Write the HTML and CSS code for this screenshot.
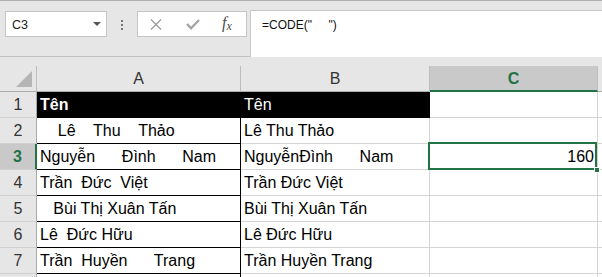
FILE: index.html
```html
<!DOCTYPE html>
<html>
<head>
<meta charset="utf-8">
<link rel="stylesheet" href="styles.css">
</head>
<body>
<div class="app">
  <div class="fbar">
    <div class="namebox"><span class="ref">C3</span><span class="caret"></span></div>
    <div class="dots"><i></i><i></i><i></i></div>
    <div class="fxbox">
      <svg class="ic-x" width="12" height="11" viewBox="0 0 12 11"><path d="M1 0.5 L11 10.5 M11 0.5 L1 10.5" stroke="#9c9c9c" stroke-width="1.4" fill="none"/></svg>
      <svg class="ic-ok" width="14" height="11" viewBox="0 0 14 11"><path d="M1 5 L5 9.3 L13 1" stroke="#a3a3a3" stroke-width="2.3" fill="none"/></svg>
      <span class="fx">f<span class="fxx">x</span></span>
    </div>
    <div class="finput">=CODE("     ")</div>
  </div>

  <div class="sheet">
    <div class="corner"><span class="tri"></span></div>
    <div class="ch">A</div>
    <div class="ch">B</div>
    <div class="ch ch-sel">C</div>
    <div class="ch ch-rest"></div>

    <div class="rh">1</div>
    <div class="c a dark"><b>Tên</b></div>
    <div class="c dark">Tên</div>
    <div class="c"></div>
    <div class="c"></div>

    <div class="rh">2</div>
    <div class="c a">    Lê    Thu    Thảo</div>
    <div class="c">Lê Thu Thảo</div>
    <div class="c"></div>
    <div class="c"></div>

    <div class="rh rh-sel">3</div>
    <div class="c a">Nguyễn      Đình      Nam</div>
    <div class="c">NguyễnĐình      Nam</div>
    <div class="c num active">160<span class="sel"><span class="handle"></span></span></div>
    <div class="c"></div>

    <div class="rh">4</div>
    <div class="c a">Trần  Đức  Việt</div>
    <div class="c">Trần Đức Việt</div>
    <div class="c"></div>
    <div class="c"></div>

    <div class="rh">5</div>
    <div class="c a">   Bùi Thị Xuân Tấn</div>
    <div class="c">Bùi Thị Xuân Tấn</div>
    <div class="c"></div>
    <div class="c"></div>

    <div class="rh">6</div>
    <div class="c a">Lê  Đức Hữu</div>
    <div class="c">Lê Đức Hữu</div>
    <div class="c"></div>
    <div class="c"></div>

    <div class="rh">7</div>
    <div class="c a">Trần  Huyền      Trang</div>
    <div class="c">Trần Huyền Trang</div>
    <div class="c"></div>
    <div class="c"></div>

    <div class="rh"></div>
    <div class="c a"></div>
    <div class="c"></div>
    <div class="c"></div>
    <div class="c"></div>
  </div>
</div>
</body>
</html>
```

FILE: styles.css
```css
* { box-sizing: border-box; }
html, body { margin: 0; padding: 0; }
body {
  width: 602px;
  height: 277px;
  overflow: hidden;
  background: #e6e6e6;
  font-family: "Liberation Sans", Arial, sans-serif;
  color: #000;
}
.app { width: 602px; height: 277px; overflow: hidden; }

/* formula bar */
.fbar {
  height: 57px;
  border-top: 1px solid #b1b1b1;
  border-bottom: 1px solid #c2c2c2;
  padding-top: 9px;
  display: flex;
  align-items: flex-start;
}
.namebox {
  margin-left: 5px;
  margin-top: 1px;
  width: 102px;
  height: 26px;
  background: #fff;
  border: 1px solid #c6c6c6;
  display: flex;
  align-items: center;
  justify-content: space-between;
  padding: 0 5px 0 6px;
  font-size: 12.5px;
  color: #222;
}
.ref { padding-top: 1px; }
.caret {
  width: 0; height: 0;
  border-left: 4px solid transparent;
  border-right: 4px solid transparent;
  border-top: 4px solid #555;
  margin-top: -1px;
}
.dots {
  margin: 10px 14px 0 14px;
  width: 2px;
  display: flex;
  flex-direction: column;
  gap: 2px;
}
.dots i { display: block; width: 2px; height: 2px; background: #777; }
.fxbox {
  margin-top: 1px;
  width: 110px;
  height: 26px;
  background: #fff;
  border: 1px solid #c6c6c6;
  display: flex;
  align-items: center;
}
.ic-x { margin-left: 12px; }
.ic-ok { margin-left: 24px; }
.fx {
  margin-left: 22px;
  font-family: "Liberation Serif", "Times New Roman", serif;
  font-style: italic;
  font-size: 16px;
  color: #4a4a4a;
  line-height: 1;
  margin-top: -3px;
}
.fxx { font-size: 12px; position: relative; top: 2px; }
.finput {
  margin-left: 3px;
  flex: 1;
  height: 47px;
  background: #fff;
  border: 1px solid #c6c6c6;
  border-bottom: none;
  border-right: none;
  padding: 6px 0 0 11px;
  font-size: 12px;
  line-height: 16px;
  white-space: pre;
  color: #111;
}

/* sheet */
.sheet {
  margin-top: 9px;
  display: grid;
  grid-template-columns: 37px 204px 189px 168px 1fr;
  grid-auto-rows: 26px;
  font-size: 16px;
}
.corner {
  background: #e6e6e6;
  border-right: 1px solid #bdbdbd;
  border-bottom: 1px solid #ababab;
  position: relative;
}
.tri {
  position: absolute;
  left: 16px;
  top: 5px;
  width: 0; height: 0;
  border-left: 16px solid transparent;
  border-bottom: 16px solid #b5b5b5;
}
.ch {
  background: #e6e6e6;
  border-right: 1px solid #bdbdbd;
  border-bottom: 1px solid #ababab;
  text-align: center;
  line-height: 24px;
  padding-top: 1px;
  color: #333;
}
.ch-sel {
  background: #c9c9c9;
  color: #217346;
  font-weight: bold;
  border-bottom: 2px solid #217346;
}
.ch-rest { border-right: none; }
.rh {
  background: #e6e6e6;
  border-right: 1px solid #a9a9a9;
  border-bottom: 1px solid #d0d0d0;
  text-align: center;
  line-height: 24px;
  padding-top: 1px;
  color: #333;
}
.rh-sel {
  background: #c9c9c9;
  color: #217346;
  font-weight: bold;
  border-right: 2px solid #217346;
}
.c {
  background: #fff;
  border-right: 1px solid #d4d4d4;
  border-bottom: 1px solid #d4d4d4;
  padding: 1px 3px 0 3px;
  line-height: 24px;
  white-space: pre;
  overflow: hidden;
}
.c.a { border-color: #000; }
.c.dark { background: #000; color: #fff; border-color: #000; }
.c.num { text-align: right; }
.c.active { position: relative; overflow: visible; }
.sel {
  position: absolute;
  left: -2px;
  top: -2px;
  right: 0;
  bottom: -1px;
  border: 2px solid #217346;
}
.handle {
  position: absolute;
  right: -5px;
  bottom: -5px;
  width: 6px;
  height: 6px;
  background: #217346;
  border: 1px solid #fff;
}
```
